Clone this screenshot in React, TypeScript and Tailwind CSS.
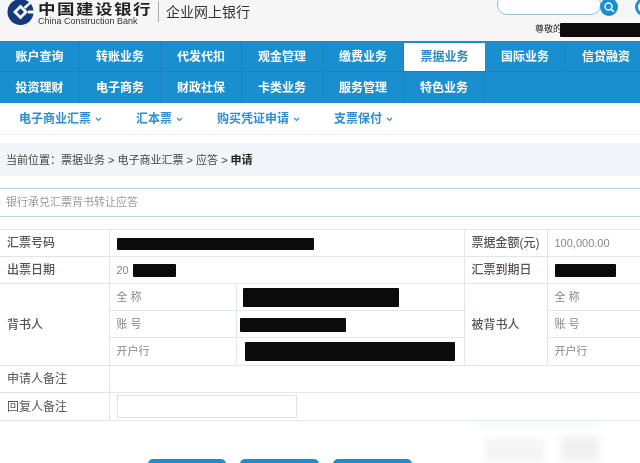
import React from "react";

const cjk = { fontFamily: '"Liberation Sans","Noto Sans CJK SC",sans-serif' };

const row1 = ["账户查询", "转账业务", "代发代扣", "观金管理", "缴费业务", "票据业务", "国际业务", "信贷融资"];
const row2 = ["投资理财", "电子商务", "财政社保", "卡类业务", "服务管理", "特色业务"];

function Chevron() {
  return (
    <svg width="7" height="5" viewBox="0 0 7 5" className="ml-[4px] mt-[1px]">
      <path d="M1 1l2.5 2.5L6 1" fill="none" stroke="currentColor" strokeWidth="1.1" />
    </svg>
  );
}

function Logo() {
  return (
    <svg width="27" height="26" viewBox="0 0 27 26" className="shrink-0 -mt-[1px]">
      <circle cx="13.5" cy="13" r="13" fill="#143a7b" />
      <path d="M13.5 5.5L21 13L13.5 20.5L6 13Z" fill="#f6f6f6" />
      <path d="M13.5 9.5L17 13L13.5 16.5L10 13Z" fill="#143a7b" />
      <path d="M16.5 8L26 0L27 1.5L18.5 10Z" fill="#f6f6f6" />
      <path d="M21 11.5L27 11.5L27 14.5L21 14.5Z" fill="#f6f6f6" />
    </svg>
  );
}

function Blot({ w, h = 14, ml = 0 }: { w: number; h?: number; ml?: number }) {
  return <span className="inline-block bg-[#0b0b0b] align-middle rounded-[1px]" style={{ width: w, height: h, marginLeft: ml }} />;
}

const label = "border border-[#dfe5ee] text-[12px] text-[#555] text-left";
const cell = "border border-[#e3e8f0] text-[11px] text-[#888] text-left";
const navItem = "flex-none flex items-center justify-center border-r border-[#1783bf] pt-[1px]";

export default function App() {
  return (
    <div className="relative w-[640px] h-[463px] overflow-hidden bg-white blur-[0.45px]" style={cjk}>
      <header className="relative h-[41px] bg-[#f6f6f6] flex items-start">
        <div className="flex items-start pl-[7px]">
          <Logo />
          <div className="ml-[4px] w-[120px] leading-none">
            <div className="origin-left scale-x-[1.25] text-[14px] font-bold text-[#222] tracking-[1.2px] mt-[2px] h-[14px] leading-[14px] whitespace-nowrap">中国建设银行</div>
            <div className="text-[9px] leading-[9px] mt-[1px] text-[#333] whitespace-nowrap">China Construction Bank</div>
          </div>
          <div className="w-px h-[21px] bg-[#aaa] mt-[1px]" />
          <div className="ml-[7px] mt-[3px] text-[14px] leading-[18px] text-[#333] whitespace-nowrap">企业网上银行</div>
        </div>
        <div className="absolute left-[497px] top-[-6px] w-[104px] h-[21px] rounded-[10px] bg-white border border-[#8fc0dc]" />
        <div className="absolute left-[600px] top-[-2px] w-[18px] h-[18px] rounded-full bg-[#1a8fd0] flex items-center justify-center">
          <svg width="12" height="12" viewBox="0 0 12 12">
            <circle cx="5.5" cy="5.5" r="3.5" fill="none" stroke="#fff" strokeWidth="1.4" />
            <path d="M8 8l3 3" stroke="#fff" strokeWidth="1.5" />
          </svg>
        </div>
        <div className="absolute left-[635px] top-[-2px] w-[18px] h-[18px] rounded-full bg-[#fff] border-[3px] border-[#1a8fd0]" />
        <div className="absolute left-[535px] top-[23px] flex items-center h-[14px]">
          <span className="text-[9px] text-[#222] whitespace-nowrap">尊敬的</span>
          <Blot w={90} h={14} ml={-2} />
        </div>
      </header>

      <nav className="h-[62px] bg-[#1a8fd0] text-white text-[12px] font-bold">
        <div className="flex h-[31px] border-b border-[#1783bf]">
          {row1.map((t, i) => (
            <div
              key={t}
              className={
                i === 5
                  ? "w-[81px] flex-none h-[28px] mt-[2px] bg-white text-[#2a8ac2] flex items-center justify-center"
                  : i === 0
                  ? "w-[80px] " + navItem
                  : "w-[81px] " + navItem
              }
            >
              {t}
            </div>
          ))}
        </div>
        <div className="flex h-[31px]">
          {row2.map((t, i) => (
            <div key={t} className={i === 0 ? "w-[80px] " + navItem : "w-[81px] " + navItem}>
              {t}
            </div>
          ))}
        </div>
      </nav>

      <div className="h-[32px] flex items-center text-[12px] font-bold text-[#2e8fd0] border-b border-[#eee] pl-[19px] whitespace-nowrap">
        <span className="flex items-center w-[117px]">电子商业汇票<Chevron /></span>
        <span className="flex items-center w-[81px]">汇本票<Chevron /></span>
        <span className="flex items-center w-[117px]">购买凭证申请<Chevron /></span>
        <span className="flex items-center">支票保付<Chevron /></span>
      </div>

      <div className="mt-[8px] h-[33px] bg-[#f2f4f9] flex items-center pl-[6px] pt-[1px] text-[11px] text-[#444] whitespace-nowrap">
        当前位置：票据业务 &gt; 电子商业汇票 &gt; 应答 &gt; <b className="text-[#222]">&nbsp;申请</b>
      </div>

      <div className="mt-[12px] h-[29px] border-y border-[#b9d3e2] flex items-center pl-[6px] text-[11px] text-[#999]">
        银行承兑汇票背书转让应答
      </div>

      <table className="mt-[12px] w-[640px] table-fixed border-collapse border-t border-b border-[#b5d3e6] [&_td]:p-0 [&_td]:pl-[7px] [&_tr>*:first-child]:border-l-0 [&_tr>*:last-child]:border-r-0">
        <colgroup>
          <col className="w-[109px]" />
          <col className="w-[127px]" />
          <col className="w-[228px]" />
          <col className="w-[83px]" />
          <col className="w-[93px]" />
        </colgroup>
        <tbody>
          <tr className="h-[27px]">
            <td className={label + " font-medium"}>汇票号码</td>
            <td colSpan={2} className={cell}><Blot w={197} h={12} /></td>
            <td className={label + " font-medium"}>票据金额(元)</td>
            <td className={cell}>100,000.00</td>
          </tr>
          <tr className="h-[27px]">
            <td className={label + " font-medium"}>出票日期</td>
            <td colSpan={2} className={cell}>20<Blot w={43} h={13} ml={4} /></td>
            <td className={label + " font-medium"}>汇票到期日</td>
            <td className={cell}><Blot w={61} h={13} /></td>
          </tr>
          <tr className="h-[27px]">
            <td rowSpan={3} className={label + " font-medium"}>背书人</td>
            <td className={cell}>全 称</td>
            <td className={cell + " !pl-[6px]"}><Blot w={156} h={19} /></td>
            <td rowSpan={3} className={label + " font-medium"}>被背书人</td>
            <td className={cell}>全 称</td>
          </tr>
          <tr className="h-[27px]">
            <td className={cell}>账 号</td>
            <td className={cell + " !pl-[3px]"}><Blot w={106} h={14} /></td>
            <td className={cell}>账 号</td>
          </tr>
          <tr className="h-[28px]">
            <td className={cell}>开户行</td>
            <td className={cell + " !pl-[8px]"}><Blot w={210} h={19} /></td>
            <td className={cell}>开户行</td>
          </tr>
          <tr className="h-[27px]">
            <td className={label}>申请人备注</td>
            <td colSpan={4} className={cell}></td>
          </tr>
          <tr className="h-[28px]">
            <td className={label}>回复人备注</td>
            <td colSpan={4} className={cell}>
              <div className="w-[180px] h-[23px] border border-[#dfe3e8] bg-white" />
            </td>
          </tr>
        </tbody>
      </table>

      <div className="flex pl-[148px] gap-[14px] mt-[38px]">
        <button className="w-[78px] h-[24px] rounded-[5px] bg-[#1a8fd0]" />
        <button className="w-[79px] h-[24px] rounded-[5px] bg-[#1a8fd0]" />
        <button className="w-[79px] h-[24px] rounded-[5px] bg-[#1a8fd0]" />
      </div>

      <div className="absolute left-[475px] top-[421px] w-[130px] h-[42px] blur-[3px] pointer-events-none">
        <div className="absolute left-[0px] top-[0px] w-[125px] h-[4px] bg-[#eef5f9]" />
        <div className="absolute left-[10px] top-[18px] w-[60px] h-[24px] bg-[#f5f5f5]" />
        <div className="absolute left-[85px] top-[16px] w-[40px] h-[24px] bg-[#f1f1f1]" />
      </div>
    </div>
  );
}
